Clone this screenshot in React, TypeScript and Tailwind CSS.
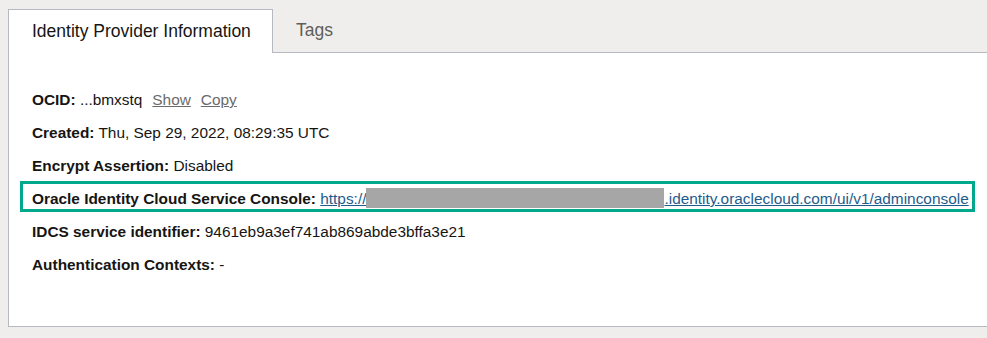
import React from 'react';

export default function App() {
  const font = { fontFamily: '"Liberation Sans", Arial, sans-serif' };
  return (
    <div className="min-h-screen w-full overflow-hidden bg-[#f0eeec] pt-[9px] pl-2" style={font}>
      {/* tabs */}
      <div className="flex items-stretch">
        <div className="relative z-10 -mb-px flex h-[44px] w-[265px] shrink-0 items-center whitespace-nowrap border border-b-0 border-[#b6b9c0] bg-white px-[23px] text-[17.5px] text-[#161513]">
          Identity Provider Information
        </div>
        <div className="flex h-[43px] shrink-0 items-center whitespace-nowrap px-[23px] text-[17.5px] text-[#5f5e5b]">Tags</div>
      </div>

      {/* panel */}
      <div className="h-[275px] border border-r-0 border-[#b6b9c0] bg-white pl-[23px] pt-[30px] text-[15.4px] leading-[33px] text-[#161513]">
        <div>
          <b>OCID:</b> ...bmxstq
          <span className="ml-[10px] cursor-pointer text-[#6b6b6b] underline">Show</span>
          <span className="ml-[10px] cursor-pointer text-[#6b6b6b] underline">Copy</span>
        </div>
        <div>
          <b>Created:</b> Thu, Sep 29, 2022, 08:29:35 UTC
        </div>
        <div>
          <b>Encrypt Assertion:</b> Disabled
        </div>
        <div className="relative whitespace-nowrap">
          <span className="pointer-events-none absolute -left-[12px] top-[-1px] h-[31px] w-[955px] border-[3px] border-[#00a98d]" />
          <b>Oracle Identity Cloud Service Console:</b>{' '}
          <span className="text-[#1f5c8c] underline">
            https://
            <span className="inline-block h-[20px] w-[298px] translate-y-[4px] bg-[#a6a6a6] align-baseline" />
            .identity.oraclecloud.com/ui/v1/adminconsole
          </span>
        </div>
        <div>
          <b>IDCS service identifier:</b> 9461eb9a3ef741ab869abde3bffa3e21
        </div>
        <div>
          <b>Authentication Contexts:</b> -
        </div>
      </div>
    </div>
  );
}
